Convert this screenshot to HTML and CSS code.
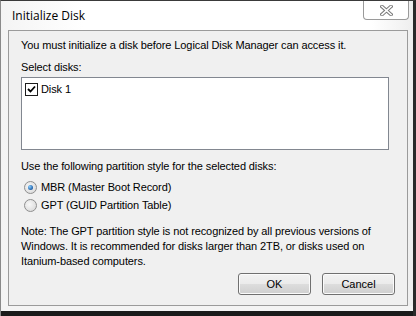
FILE: index.html
```html
<!DOCTYPE html>
<html lang="en">
<head>
  <meta charset="UTF-8" />
  <title>Initialize Disk</title>
  <link rel="stylesheet" href="styles.css">
</head>
<body>

  <div class="window">
    <div class="titlebar">
      <span class="title">Initialize Disk</span>
      <div class="closeBtn">
        <svg width="13" height="11" viewBox="0 0 13 11">
          <path d="M2 1.5 L11 9.5 M11 1.5 L2 9.5" stroke="#7a7a7a" stroke-width="3.6" stroke-linecap="square" fill="none"/>
          <path d="M2 1.5 L11 9.5 M11 1.5 L2 9.5" stroke="#ffffff" stroke-width="1.6" stroke-linecap="square" fill="none"/>
        </svg>
      </div>
    </div>

    <div class="client">
      <p class="intro">You must initialize a disk before Logical Disk Manager can access it.</p>
      <p class="label">Select disks:</p>
      <div class="listBox">
        <div class="listItem">
          <span class="check">
            <svg width="9" height="9" viewBox="0 0 9 9">
              <path d="M1 4 L3.5 6.5 L8 1.5" stroke="#000" stroke-width="1.8" fill="none"/>
            </svg>
          </span>
          <span>Disk 1</span>
        </div>
      </div>

      <p class="label styleLabel">Use the following partition style for the selected disks:</p>
      <div class="radioRow firstRadio">
        <span class="radio checked"><span class="dot"></span></span>
        <span>MBR (Master Boot Record)</span>
      </div>
      <div class="radioRow">
        <span class="radio"></span>
        <span>GPT (GUID Partition Table)</span>
      </div>

      <p class="note">
        Note: The GPT partition style is not recognized by all previous versions of<br>
        Windows. It is recommended for disks larger than 2TB, or disks used on<br>
        Itanium-based computers.
      </p>

      <div class="buttons">
        <button>OK</button>
        <button>Cancel</button>
      </div>
    </div>
    <div class="bottomEdge"></div>
  </div>

</body>
</html>
```

FILE: styles.css
```css
body {
  margin: 0;
  background: #1a1a1a;
  font-family: 'Liberation Sans', Arial, sans-serif;
  font-size: 11px;
  letter-spacing: -0.1px;
  color: #000;
}

.window {
  width: 416px;
  height: 316px;
  box-sizing: border-box;
  background: linear-gradient(to right, #f4f4f4, #ffffff 20%, #ffffff 90%, #eeeeee);
  border-left: 1px solid #8a8a8a;
  border-right: 3px solid #2a2a2a;
  border-top: 1px solid #3a3a3a;
  display: flex;
  flex-direction: column;
}

.titlebar {
  height: 29px;
  display: flex;
  justify-content: space-between;
  align-items: flex-start;
}

.title {
  font-family: 'Open Sans', 'Liberation Sans', sans-serif;
  font-size: 12px;
  letter-spacing: 0;
  margin: 6px 0 0 11px;
  color: #000;
}

.closeBtn {
  width: 44px;
  height: 18px;
  margin-right: 4px;
  border: 1px solid #9a9a9a;
  border-top: none;
  border-radius: 0 0 4px 4px;
  background: #fff;
  display: flex;
  align-items: center;
  justify-content: center;
}

.client {
  margin: 0 5px 0 7px;
  height: 276px;
  box-sizing: border-box;
  border: 1px solid #9b9b9b;
  background: #f0f0f0;
  padding: 7px 12px 0 12px;
  line-height: 15px;
}

p {
  margin: 0;
}

.label {
  margin-top: 7px;
}

.listBox {
  margin-top: 2px;
  width: 368px;
  height: 73px;
  box-sizing: border-box;
  border: 1px solid #828790;
  background: #fff;
  padding: 4px 3px;
}

.listItem {
  display: flex;
  align-items: center;
  gap: 3px;
}

.check {
  width: 11px;
  height: 11px;
  border: 1px solid #1c1c1c;
  background: #fff;
  display: flex;
  align-items: center;
  justify-content: center;
}

.styleLabel {
  margin-top: 9px;
}

.radioRow {
  display: flex;
  align-items: center;
  gap: 4px;
  height: 18px;
  padding-left: 3px;
}

.firstRadio {
  margin-top: 4px;
}

.radio {
  width: 11px;
  height: 11px;
  border-radius: 50%;
  border: 1px solid #8f8f8f;
  background: radial-gradient(circle at 40% 40%, #f7f7f7, #d4d4d4);
  display: flex;
  align-items: center;
  justify-content: center;
}

.radio .dot {
  width: 5px;
  height: 5px;
  border-radius: 50%;
  background: radial-gradient(circle at 35% 35%, #8ad0ff, #1f5fa8 70%, #0e3a77);
}

.note {
  margin-top: 10px;
}

.buttons {
  display: flex;
  justify-content: flex-end;
  gap: 11px;
  margin-top: 4px;
  padding-right: 0;
}

button {
  width: 73px;
  height: 22px;
  font-family: 'Liberation Sans', Arial, sans-serif;
  font-size: 11px;
  color: #000;
  border: 1px solid #707070;
  border-radius: 3px;
  background: linear-gradient(to bottom, #f2f2f2 0%, #ebebeb 50%, #dddddd 51%, #cfcfcf 100%);
  box-shadow: inset 0 0 0 1px #fbfbfb;
  padding: 0;
}

.bottomEdge {
  flex: 1;
  background: linear-gradient(to bottom, #f4f4f4 0%, #f4f4f4 50%, #1a1a1a 51%);
}
```
